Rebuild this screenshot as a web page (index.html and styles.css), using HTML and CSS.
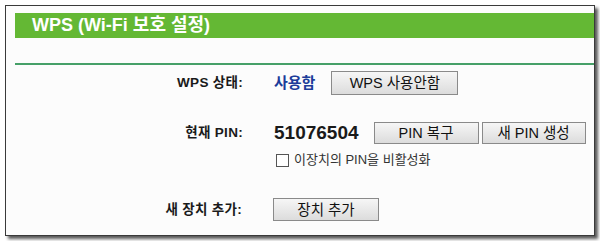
FILE: index.html
```html
<!DOCTYPE html>
<html lang="ko">
<head>
  <meta charset="UTF-8">
  <title>WPS (Wi-Fi 보호 설정)</title>
  <link rel="stylesheet" href="styles.css">
</head>
<body>
  <div class="frame">
    <div class="header">WPS (Wi-Fi 보호 설정)</div>
    <div class="divider"></div>
    <div class="row row-status">
      <span class="label">WPS 상태:</span>
      <span class="status">사용함</span>
      <button class="btn btn-wps">WPS 사용안함</button>
    </div>
    <div class="row row-pin">
      <span class="label">현재 PIN:</span>
      <span class="pin">51076504</span>
      <button class="btn btn-restore">PIN 복구</button>
      <button class="btn btn-new">새 PIN 생성</button>
    </div>
    <div class="check-row">
      <span class="checkbox"></span>
      <span class="check-text">이장치의 PIN을 비활성화</span>
    </div>
    <div class="row row-add">
      <span class="label">새 장치 추가:</span>
      <button class="btn btn-add">장치 추가</button>
    </div>
  </div>
</body>
</html>
```

FILE: styles.css
```css
body {
  margin: 0;
  background-color: #ffffff;
  font-family: "Liberation Sans", "Noto Sans CJK KR", sans-serif;
  color: #1a1a1a;
}
.frame {
  margin: 5px;
  width: 588px;
  height: 229px;
  border: 1px solid #3a3a3a;
  background-color: #fcfcfc;
  box-shadow: 3px 3px 3px rgba(0, 0, 0, 0.65);
  overflow: hidden;
}
.header {
  margin: 7px 0 0 9px;
  height: 25px;
  line-height: 25px;
  padding-left: 17px;
  background-color: #64b834; /* 초록 제목 막대 */
  color: #ffffff;
  font-size: 18px;
  font-weight: bold;
}
.divider {
  margin: 25px 0 0 9px;
  height: 2px;
  background-color: #46a068;
}
.row {
  display: flex;
  align-items: center;
}
.label {
  width: 237px;
  text-align: right;
  margin-right: 31px;
  font-size: 13.5px;
  font-weight: bold;
  line-height: 16px;
  letter-spacing: 0.3px;
}
.row-status {
  margin-top: 6px;
  height: 24px;
}
.row-pin {
  margin-top: 27px;
  height: 22px;
}
.row-add {
  margin-top: 31px;
  height: 23px;
}
.row-add .label {
  width: 236px;
}
.status {
  color: #1c3d9a;
  font-size: 15px;
  font-weight: bold;
  margin-right: 16px;
  line-height: 16px;
}
.pin {
  font-size: 19px;
  font-weight: bold;
  margin-right: 15px;
  line-height: 20px;
}
.btn {
  height: 100%;
  border: 1px solid #8a8a8a;
  background: linear-gradient(#f6f6f6, #dcdcdc);
  font-family: "Liberation Sans", "Noto Sans CJK KR", sans-serif;
  font-size: 14.5px;
  color: #111111;
  padding: 0;
  line-height: 18px;
}
.btn-wps { width: 127px; }
.btn-restore { width: 105px; margin-right: 3px; }
.btn-new { width: 104px; }
.btn-add { width: 106px; }
.check-row {
  margin-top: 9px;
  height: 14px;
  padding-left: 270px;
  display: flex;
  align-items: center;
}
.checkbox {
  width: 11px;
  height: 11px;
  border: 1px solid #555555;
  background-color: #ffffff;
  margin-right: 5px;
}
.check-text {
  font-size: 13px;
  color: #333333;
  line-height: 16px;
}
```
